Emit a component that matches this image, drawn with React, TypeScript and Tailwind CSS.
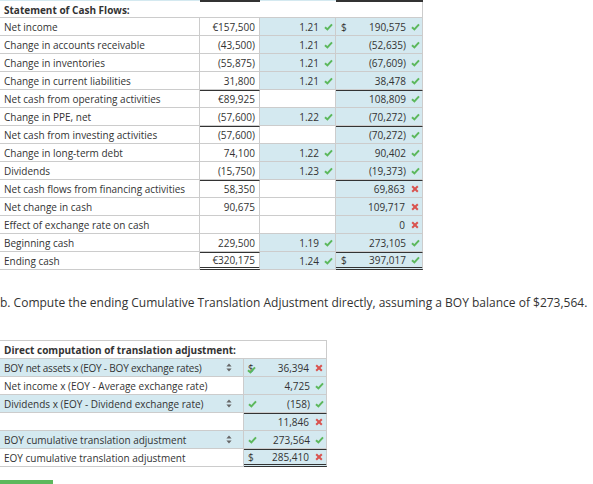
import React from 'react';

type Mark = 'ok' | 'bad' | null;

interface FlowRow {
  label: string;
  local: string;
  rate?: string;
  usd: string;
  mark: Mark;
  dollar?: boolean;
  total?: boolean;
  last?: boolean;
}

const rows: FlowRow[] = [
  { label: 'Net income', local: '€157,500', rate: '1.21', usd: '190,575', mark: 'ok', dollar: true },
  { label: 'Change in accounts receivable', local: '(43,500)', rate: '1.21', usd: '(52,635)', mark: 'ok' },
  { label: 'Change in inventories', local: '(55,875)', rate: '1.21', usd: '(67,609)', mark: 'ok' },
  { label: 'Change in current liabilities', local: '31,800', rate: '1.21', usd: '38,478', mark: 'ok' },
  { label: 'Net cash from operating activities', local: '€89,925', usd: '108,809', mark: 'ok', total: true },
  { label: 'Change in PPE, net', local: '(57,600)', rate: '1.22', usd: '(70,272)', mark: 'ok' },
  { label: 'Net cash from investing activities', local: '(57,600)', usd: '(70,272)', mark: 'ok', total: true },
  { label: 'Change in long-term debt', local: '74,100', rate: '1.22', usd: '90,402', mark: 'ok' },
  { label: 'Dividends', local: '(15,750)', rate: '1.23', usd: '(19,373)', mark: 'ok' },
  { label: 'Net cash flows from financing activities', local: '58,350', usd: '69,863', mark: 'bad', total: true },
  { label: 'Net change in cash', local: '90,675', usd: '109,717', mark: 'bad' },
  { label: 'Effect of exchange rate on cash', local: '', usd: '0', mark: 'bad' },
  { label: 'Beginning cash', local: '229,500', rate: '1.19', usd: '273,105', mark: 'ok' },
  { label: 'Ending cash', local: '€320,175', rate: '1.24', usd: '397,017', mark: 'ok', dollar: true, total: true, last: true },
];

const Check = ({ className = '' }: { className?: string }) => (
  <svg width="9" height="8" viewBox="0 0 9 8" className={className}>
    <path d="M1 4.2 L3.4 6.4 L8 1.3" fill="none" stroke="#5cb85c" strokeWidth="2" />
  </svg>
);

const Cross = ({ className = '' }: { className?: string }) => (
  <svg width="8" height="8" viewBox="0 0 8 8" className={className}>
    <path d="M1.2 1.2 L6.8 6.8 M6.8 1.2 L1.2 6.8" fill="none" stroke="#d9534f" strokeWidth="2" />
  </svg>
);

const MarkIcon = ({ mark }: { mark: Mark }) =>
  mark === 'ok' ? <Check className="ml-[5px]" /> : mark === 'bad' ? <Cross className="ml-[6px] mr-[1px]" /> : null;

const Sort = () => (
  <svg width="6" height="9" viewBox="0 0 6 9">
    <path d="M3 0.5 L5.6 3.6 L0.4 3.6 Z M3 8.5 L5.6 5.4 L0.4 5.4 Z" fill="#666" />
  </svg>
);

const doubleBottom = 'border-b-[3px] border-b-[#333] border-double -mb-[1px]';

const CashFlowTable = () => (
  <div className="w-[423px]">
    {/* leftover bottom edge of the table above */}
    <div className="flex h-[2px]">
      <div className="w-[200px] h-[1px] bg-[#d4e9f0]" />
      <div className="w-[60px] bg-[#333]" />
      <div className="w-[76px] h-[1px] bg-[#d4e9f0]" />
      <div className="w-[87px] bg-[#333]" />
    </div>
    <div className="h-[16px] flex items-center px-[4px] border-r border-b border-[#ccc] font-bold">
      Statement of Cash Flows:
    </div>
    {rows.map((r) => (
      <div key={r.label} className="grid grid-cols-[200px_60px_76px_87px] h-[18px] border-b border-[#ccc]">
        <div className="flex items-center px-[4px] border-r border-[#ccc]">{r.label}</div>
        <div
          className={`flex items-center justify-end pr-[4px] border-r border-[#ccc] ${r.total ? 'border-t border-t-[#333]' : ''} ${r.last ? doubleBottom : ''}`}
        >
          {r.local}
        </div>
        <div className={`flex items-center justify-end pr-[2px] border-r border-[#ccc] ${r.rate ? 'bg-[#d4e9f0]' : ''}`}>
          {r.rate && (
            <>
              {r.rate}
              <Check className="ml-[5px]" />
            </>
          )}
        </div>
        <div
          className={`flex items-center pl-[5px] pr-[2px] bg-[#d4e9f0] border-r border-[#ccc] ${r.total ? 'border-t border-t-[#333]' : ''} ${r.last ? doubleBottom : ''}`}
        >
          <span className="w-[10px]">{r.dollar ? '$' : ''}</span>
          <span className="flex-1 text-right">{r.usd}</span>
          <MarkIcon mark={r.mark} />
        </div>
      </div>
    ))}
  </div>
);

interface DirectRow {
  label: string;
  value: string;
  mark: Mark;
  select?: boolean;
  pre?: 'check' | 'dollarcheck' | 'dollar';
  total?: boolean;
  last?: boolean;
}

const direct: DirectRow[] = [
  { label: 'BOY net assets x (EOY - BOY exchange rates)', value: '36,394', mark: 'bad', select: true, pre: 'dollarcheck' },
  { label: 'Net income x (EOY - Average exchange rate)', value: '4,725', mark: 'ok' },
  { label: 'Dividends x (EOY - Dividend exchange rate)', value: '(158)', mark: 'ok', select: true, pre: 'check' },
  { label: '', value: '11,846', mark: 'bad', total: true },
  { label: 'BOY cumulative translation adjustment', value: '273,564', mark: 'ok', select: true, pre: 'check' },
  { label: 'EOY cumulative translation adjustment', value: '285,410', mark: 'bad', pre: 'dollar', total: true, last: true },
];

const DirectTable = () => (
  <div className="w-[327px] border-t border-[#ccc]">
    <div className="h-[18px] flex items-center px-[4px] border-r border-b border-[#ccc] font-bold">
      Direct computation of translation adjustment:
    </div>
    {direct.map((r, i) => (
      <div key={i} className="grid grid-cols-[244px_83px] h-[18px] border-b border-[#ccc]">
        <div className={`flex items-center justify-between pl-[4px] pr-[11px] border-r border-[#ccc] ${r.select ? 'bg-[#d4e9f0]' : ''}`}>
          <span className={i === 0 ? 'tracking-[-0.2px]' : ''}>{r.label}</span>
          {r.select && <Sort />}
        </div>
        <div
          className={`relative flex items-center pl-[4px] pr-[2px] bg-[#d4e9f0] border-r border-[#ccc] ${r.total ? 'border-t border-t-[#333]' : ''} ${r.last ? doubleBottom : ''}`}
        >
          <span className="relative w-[12px]">
            {r.pre === 'check' && <Check />}
            {r.pre === 'dollar' && '$'}
            {r.pre === 'dollarcheck' && (
              <>
                $
                <Check className="absolute left-[-1px] top-[3px]" />
              </>
            )}
          </span>
          <span className="flex-1 text-right">{r.value}</span>
          <MarkIcon mark={r.mark} />
        </div>
      </div>
    ))}
  </div>
);

export default function App() {
  return (
    <div className="w-[593px] h-[484px] overflow-hidden bg-white text-[#333] text-[10px] leading-none font-['Open_Sans',sans-serif]">
      <CashFlowTable />
      <p className="mt-[27px] text-[12px] leading-none">
        b. Compute the ending Cumulative Translation Adjustment directly, assuming a BOY balance of $273,564.
      </p>
      <div className="mt-[31px]">
        <DirectTable />
      </div>
      <div className="mt-[13px] w-[53px] h-[4px] bg-[#5cb85c]" />
    </div>
  );
}
